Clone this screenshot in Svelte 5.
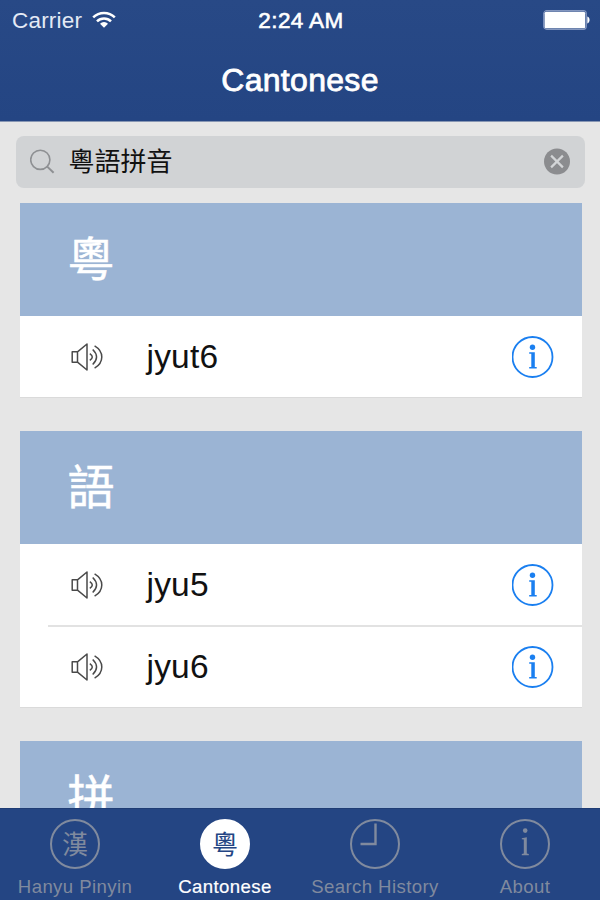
<script lang="ts">
	interface Entry {
		char: string;
		readings: string[];
	}

	let query = $state('粵語拼音');
	let activeTab = $state('cantonese');

	const entries: Entry[] = [
		{ char: '粵', readings: ['jyut6'] },
		{ char: '語', readings: ['jyu5', 'jyu6'] },
		{ char: '拼', readings: [] }
	];

	const tabs = [
		{ id: 'pinyin', label: 'Hanyu Pinyin', glyph: '漢' },
		{ id: 'cantonese', label: 'Cantonese', glyph: '粵' },
		{ id: 'history', label: 'Search History', glyph: '' },
		{ id: 'about', label: 'About', glyph: '' }
	];
</script>

<div class="screen">
	<header>
		<div class="status">
			<div class="carrier">
				<span>Carrier</span>
				<svg width="24" height="18" viewBox="0 0 24 18">
					<g fill="none" stroke="#fff" stroke-width="2.5">
						<path d="M1.2 6.4a15.4 15.4 0 0 1 21.6 0" />
						<path d="M5 10.4a10 10 0 0 1 14 0" />
					</g>
					<path d="M12 16.8l-4-4.1a5.7 5.7 0 0 1 8 0z" fill="#fff" />
				</svg>
			</div>
			<span class="time">2:24 AM</span>
			<svg class="battery" width="47" height="20" viewBox="0 0 47 20">
				<rect x="0.7" y="0.7" width="42.6" height="18.6" rx="3" fill="none" stroke="#8497c0" stroke-width="1.2" />
				<rect x="1.6" y="1.8" width="40.6" height="16.4" rx="1.5" fill="#fff" />
				<path d="M44.3 6.6c3 .8 3 6 0 6.8z" fill="#fff" />
			</svg>
		</div>
		<h1>Cantonese</h1>
	</header>

	<main>
		<div class="search">
			<svg width="26" height="26" viewBox="0 0 26 26" fill="none" stroke="#8e9093" stroke-width="1.6">
				<circle cx="10.3" cy="10.8" r="9.6" />
				<path d="M17 17.4l6.6 6.4" stroke-width="2" />
			</svg>
			<input type="text" bind:value={query} aria-label="Search" spellcheck="false" />
			<button class="clear" type="button" aria-label="Clear" onclick={() => (query = '')}>
				<svg width="27" height="27" viewBox="0 0 27 27">
					<circle cx="13" cy="13.5" r="13" fill="#8b8c8f" />
					<path d="M7.1 7.6l11.8 11.8M18.9 7.6L7.1 19.4" stroke="#d3d5d7" stroke-width="2.2" />
				</svg>
			</button>
		</div>

		{#each entries as entry}
			<section>
				<h2>{entry.char}</h2>
				{#each entry.readings as reading}
					<div class="row">
						<svg width="34" height="30" viewBox="0 0 34 30" fill="none" stroke="#4a4a4a" stroke-width="1.5">
							<path d="M1.2 9.8h5.3v10.4H1.2zM6.5 9.8L16 2v26l-9.5-7.8" stroke-linejoin="round" />
							<path d="M18.8 11.6q5 3.4 0 6.8" />
							<path d="M21.7 7.5q7.7 7.5 0 15" />
							<path d="M23.6 3.8c9.6 5.7 9.6 16.7 0 22.4" />
						</svg>
						<span>{reading}</span>
						<button class="info" type="button" aria-label="Details">
							<svg width="42" height="42" viewBox="0 0 42 42">
								<circle cx="20.5" cy="21" r="20" fill="none" stroke="currentColor" stroke-width="1.8" />
								<circle cx="20.5" cy="11.3" r="2.7" fill="currentColor" />
								<path d="M17.2 16.2h5.6v14.7h1.9v1.6h-7.5v-1.6h2.1V17.8h-2.1z" fill="currentColor" />
							</svg>
						</button>
					</div>
				{/each}
			</section>
		{/each}
	</main>

	<nav>
		{#each tabs as tab}
			<button
				type="button"
				class="tab"
				class:active={tab.id === activeTab}
				onclick={() => (activeTab = tab.id)}
			>
				<span class="icon">
					{#if tab.id === 'history'}
						<svg width="46" height="46" viewBox="0 0 46 46" fill="none" stroke="currentColor" stroke-width="2.4">
							<path d="M23.5 2.5V23H8.5" />
						</svg>
					{:else if tab.id === 'about'}
						<svg width="46" height="46" viewBox="0 0 46 46">
							<circle cx="23.2" cy="9.6" r="2.3" fill="currentColor" />
							<path d="M19.8 17.2l5-1v16.2l2 .7v1.1h-7v-1.1l2-.7V18.5l-2-.2z" fill="currentColor" />
						</svg>
					{:else}
						{tab.glyph}
					{/if}
				</span>
				<span class="label">{tab.label}</span>
			</button>
		{/each}
	</nav>
</div>

<style>
	:global(body) {
		margin: 0;
	}

	.screen {
		display: flex;
		flex-direction: column;
		width: 600px;
		height: 900px;
		overflow: hidden;
		background: #e6e6e6;
		font-family: 'Liberation Sans', Arial, 'Noto Sans CJK TC', sans-serif;
	}

	button {
		padding: 0;
		border: none;
		background: none;
		font-family: inherit;
		cursor: pointer;
	}

	svg {
		display: block;
		flex-shrink: 0;
	}

	header {
		box-sizing: border-box;
		flex-shrink: 0;
		height: 122px;
		border-bottom: 1px solid #8796b3;
		background: linear-gradient(#284986, #244583);
		color: #fff;
	}

	.status {
		display: grid;
		grid-template-columns: 1fr auto 1fr;
		align-items: center;
		height: 40px;
		padding: 0 10px 0 12px;
		font-size: 22.5px;
	}

	.status span {
		padding-top: 2px;
	}

	.carrier {
		display: flex;
		align-items: center;
		gap: 10px;
		color: #e4eaf5;
		letter-spacing: 0.2px;
	}

	.time {
		-webkit-text-stroke: 0.6px #fff;
		letter-spacing: 0.4px;
	}

	.battery {
		justify-self: end;
	}

	h1 {
		margin: 0;
		font-size: 32px;
		font-weight: 400;
		line-height: 80px;
		text-align: center;
		letter-spacing: 0.3px;
		-webkit-text-stroke: 0.8px #fff;
	}

	main {
		flex: 1;
		min-height: 0;
		padding: 13.5px 0 0;
		overflow: hidden;
	}

	.search {
		display: flex;
		align-items: center;
		box-sizing: border-box;
		height: 52.5px;
		margin: 0 15px 15px 16px;
		padding: 0 14px;
		border-radius: 8px;
		background: #d1d3d5;
	}

	.search input {
		flex: 1;
		min-width: 0;
		margin-left: 12.5px;
		padding: 0 0 4px;
		border: none;
		outline: none;
		background: none;
		color: #111;
		font-family: 'Noto Sans CJK TC', sans-serif;
		font-size: 26px;
	}

	section {
		margin: 0 18.5px 33px 19.5px;
		border-bottom: 1px solid #dadada;
		background: #fff;
	}

	h2 {
		height: 113px;
		margin: 0;
		padding-left: 48px;
		background: #9bb4d4;
		color: #fff;
		font-family: 'Noto Sans CJK TC', sans-serif;
		font-size: 47px;
		font-weight: 400;
		line-height: 106px;
		-webkit-text-stroke: 0.5px #fff;
	}

	.row {
		display: flex;
		align-items: center;
		height: 81px;
		padding: 0 28px 0 51px;
		color: #111;
		font-size: 33.5px;
	}

	.row span {
		flex: 1;
		margin-left: 42px;
		padding-top: 1px;
		letter-spacing: 0.2px;
	}

	.row + .row {
		position: relative;
		border-top: 1px solid #fff;
	}

	.row + .row::before {
		content: '';
		position: absolute;
		top: -1px;
		left: 28px;
		right: 0;
		height: 1.5px;
		background: #e2e2e2;
	}

	.info {
		color: #1a7ff0;
	}

	nav {
		display: grid;
		grid-template-columns: repeat(4, 1fr);
		box-sizing: border-box;
		flex-shrink: 0;
		height: 92px;
		border-top: 1px solid #1f3c74;
		background: #244583;
	}

	.tab {
		display: flex;
		flex-direction: column;
		align-items: center;
		padding-top: 10px;
		color: #808a9e;
	}

	.icon {
		display: flex;
		align-items: center;
		justify-content: center;
		box-sizing: border-box;
		width: 50px;
		height: 50px;
		border: 2px solid currentColor;
		border-radius: 50%;
		font-family: 'Noto Sans CJK TC', sans-serif;
		font-size: 26px;
		line-height: 22px;
		padding-bottom: 2px;
	}

	.icon svg {
		margin-bottom: -2px;
	}

	.label {
		margin-top: 7px;
		font-size: 18.6px;
		line-height: 22px;
		letter-spacing: 0.4px;
		white-space: nowrap;
	}

	.active {
		color: #fff;
	}

	.active .icon {
		background: #fff;
		color: #244583;
		border-color: #fff;
	}

	.active .label {
		-webkit-text-stroke: 0.2px #fff;
	}
</style>
